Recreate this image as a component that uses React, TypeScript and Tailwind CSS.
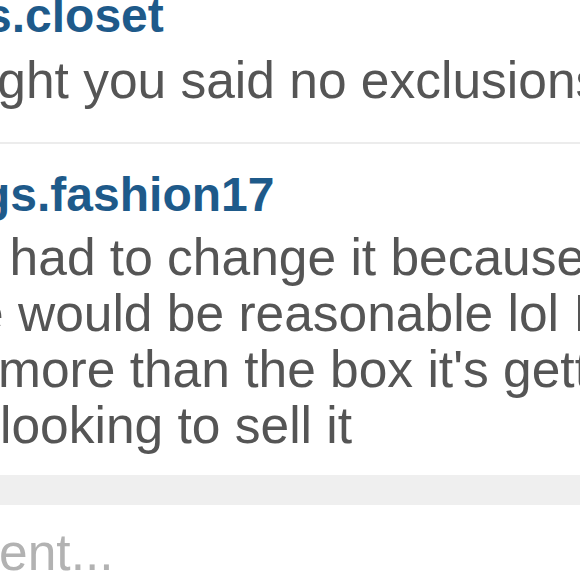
import React from 'react';

const line = 'whitespace-nowrap leading-[56px]';

export default function App() {
  return (
    <div className="w-[580px] h-[580px] overflow-hidden bg-white font-['Liberation_Sans',Arial,sans-serif] text-[51.5px]">
      <div className="-mt-[12px]">
        {/* first comment */}
        <div className="pb-[34px]">
          <div className={`${line} ml-[-15px] text-[48px] font-bold text-[#1e5a8a]`}>s.closet</div>
          <div className={`${line} mt-[8px] ml-[-103px] text-[#555555]`}>thought you said no exclusions</div>
        </div>
        <div className="h-[2px] bg-[#ececec]" />

        {/* second comment */}
        <div className="pt-[23px] pb-[22px]">
          <div className={`${line} ml-[-19px] text-[48px] font-bold text-[#1e5a8a]`}>gs.fashion17</div>
          <div className="mt-[6px] text-[#555555]">
            <div className={`${line} ml-[-19px]`}>I had to change it because</div>
            <div className={`${line} ml-[-108px]`}>price would be reasonable lol I</div>
            <div className={`${line} ml-[-2px]`}>more than the box it's getting</div>
            <div className={`${line} ml-[0px]`}>looking to sell it</div>
          </div>
        </div>

        <div className="h-[30px] bg-[#efefef]" />

        <div className="pt-[19px]">
          <div className={`${line} ml-[-290px] text-[#b2b2b2]`}>Add a comment...</div>
        </div>
      </div>
    </div>
  );
}
